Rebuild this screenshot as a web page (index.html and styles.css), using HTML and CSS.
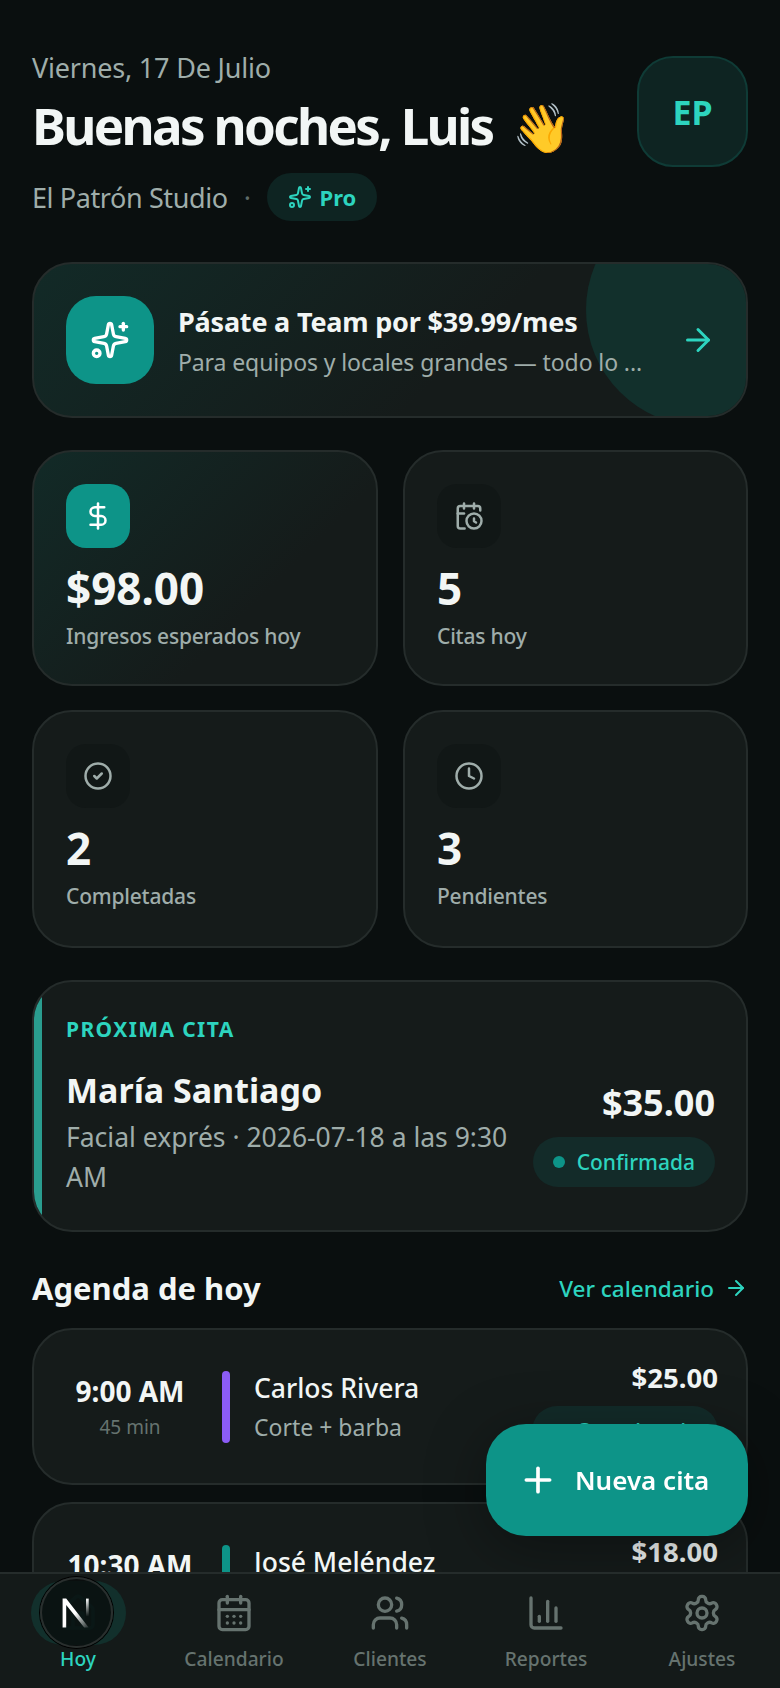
FILE: index.html
```html
<!DOCTYPE html>
<html lang="es">
  <head>
    <meta charset="UTF-8" />
    <meta name="viewport" content="width=device-width, initial-scale=1.0" />
    <title>Hoy</title>
    <link rel="stylesheet" href="styles.css">
  </head>
  <body>
    <svg class="sprite" width="0" height="0">
      <symbol id="i-sparkles" viewBox="0 0 24 24">
        <path d="M11.017 2.814a1 1 0 0 1 1.966 0l1.051 5.558a2 2 0 0 0 1.594 1.594l5.558 1.051a1 1 0 0 1 0 1.966l-5.558 1.051a2 2 0 0 0-1.594 1.594l-1.051 5.558a1 1 0 0 1-1.966 0l-1.051-5.558a2 2 0 0 0-1.594-1.594l-5.558-1.051a1 1 0 0 1 0-1.966l5.558-1.051a2 2 0 0 0 1.594-1.594z" />
        <path d="M20 2v4" /><path d="M22 4h-4" /><circle cx="4" cy="20" r="2" />
      </symbol>
      <symbol id="i-arrow" viewBox="0 0 24 24">
        <path d="M5 12h14" /><path d="m12 5 7 7-7 7" />
      </symbol>
      <symbol id="i-dollar" viewBox="0 0 24 24">
        <path d="M12 2v20" /><path d="M17 5H9.5a3.5 3.5 0 0 0 0 7h5a3.5 3.5 0 0 1 0 7H6" />
      </symbol>
      <symbol id="i-calclock" viewBox="0 0 24 24">
        <path d="M16 14v2.2l1.6 1" /><path d="M16 2v4" />
        <path d="M21 7.5V6a2 2 0 0 0-2-2H5a2 2 0 0 0-2 2v14a2 2 0 0 0 2 2h3.5" />
        <path d="M3 10h5" /><path d="M8 2v4" /><circle cx="16" cy="16" r="6" />
      </symbol>
      <symbol id="i-check" viewBox="0 0 24 24">
        <circle cx="12" cy="12" r="10" /><path d="m9 12 2 2 4-4" />
      </symbol>
      <symbol id="i-clock" viewBox="0 0 24 24">
        <circle cx="12" cy="12" r="10" /><path d="M12 6v6l4 2" />
      </symbol>
      <symbol id="i-plus" viewBox="0 0 24 24">
        <path d="M5 12h14" /><path d="M12 5v14" />
      </symbol>
      <symbol id="i-house" viewBox="0 0 24 24">
        <path d="M15 21v-8a1 1 0 0 0-1-1h-4a1 1 0 0 0-1 1v8" />
        <path d="M3 10a2 2 0 0 1 .709-1.528l7-5.999a2 2 0 0 1 2.582 0l7 5.999A2 2 0 0 1 21 10v9a2 2 0 0 1-2 2H5a2 2 0 0 1-2-2z" />
      </symbol>
      <symbol id="i-calendar" viewBox="0 0 24 24">
        <path d="M8 2v4" /><path d="M16 2v4" /><rect x="3" y="4" width="18" height="18" rx="2" /><path d="M3 10h18" />
        <path d="M8 14h.01" /><path d="M12 14h.01" /><path d="M16 14h.01" />
        <path d="M8 18h.01" /><path d="M12 18h.01" /><path d="M16 18h.01" />
      </symbol>
      <symbol id="i-users" viewBox="0 0 24 24">
        <path d="M16 21v-2a4 4 0 0 0-4-4H6a4 4 0 0 0-4 4v2" /><circle cx="9" cy="7" r="4" />
        <path d="M22 21v-2a4 4 0 0 0-3-3.87" /><path d="M16 3.13a4 4 0 0 1 0 7.75" />
      </symbol>
      <symbol id="i-chart" viewBox="0 0 24 24">
        <path d="M3 3v16a2 2 0 0 0 2 2h16" /><path d="M18 17V9" /><path d="M13 17V5" /><path d="M8 17v-3" />
      </symbol>
      <symbol id="i-gear" viewBox="0 0 24 24">
        <path d="M12.22 2h-.44a2 2 0 0 0-2 2v.18a2 2 0 0 1-1 1.73l-.43.25a2 2 0 0 1-2 0l-.15-.08a2 2 0 0 0-2.73.73l-.22.38a2 2 0 0 0 .73 2.73l.15.1a2 2 0 0 1 1 1.72v.51a2 2 0 0 1-1 1.74l-.15.09a2 2 0 0 0-.73 2.73l.22.38a2 2 0 0 0 2.73.73l.15-.08a2 2 0 0 1 2 0l.43.25a2 2 0 0 1 1 1.73V20a2 2 0 0 0 2 2h.44a2 2 0 0 0 2-2v-.18a2 2 0 0 1 1-1.73l.43-.25a2 2 0 0 1 2 0l.15.08a2 2 0 0 0 2.73-.73l.22-.39a2 2 0 0 0-.73-2.73l-.15-.08a2 2 0 0 1-1-1.74v-.5a2 2 0 0 1 1-1.74l.15-.09a2 2 0 0 0 .73-2.73l-.22-.38a2 2 0 0 0-2.73-.73l-.15.08a2 2 0 0 1-2 0l-.43-.25a2 2 0 0 1-1-1.73V4a2 2 0 0 0-2-2z" />
        <circle cx="12" cy="12" r="3" />
      </symbol>
    </svg>

    <main class="page">
      <header class="top">
        <div class="top-text">
          <p class="date">Viernes, 17 De Julio</p>
          <h1 class="hello">Buenas noches, Luis <span class="wave">👋</span></h1>
          <div class="studio">
            <span>El Patrón Studio</span>
            <span class="dot-sep">·</span>
            <span class="pro"><svg class="ico"><use href="#i-sparkles" /></svg>Pro</span>
          </div>
        </div>
        <div class="avatar">EP</div>
      </header>

      <section class="upgrade">
        <div class="upgrade-icon"><svg class="ico"><use href="#i-sparkles" /></svg></div>
        <div class="upgrade-text">
          <p class="upgrade-title">Pásate a Team por $39.99/mes</p>
          <p class="upgrade-sub">Para equipos y locales grandes — todo lo ...</p>
        </div>
        <svg class="ico upgrade-arrow"><use href="#i-arrow" /></svg>
      </section>

      <section class="stats">
        <div class="stat stat-main">
          <div class="stat-icon"><svg class="ico"><use href="#i-dollar" /></svg></div>
          <p class="stat-value">$98.00</p>
          <p class="stat-label">Ingresos esperados hoy</p>
        </div>
        <div class="stat">
          <div class="stat-icon"><svg class="ico"><use href="#i-calclock" /></svg></div>
          <p class="stat-value">5</p>
          <p class="stat-label">Citas hoy</p>
        </div>
        <div class="stat">
          <div class="stat-icon"><svg class="ico"><use href="#i-check" /></svg></div>
          <p class="stat-value">2</p>
          <p class="stat-label">Completadas</p>
        </div>
        <div class="stat">
          <div class="stat-icon"><svg class="ico"><use href="#i-clock" /></svg></div>
          <p class="stat-value">3</p>
          <p class="stat-label">Pendientes</p>
        </div>
      </section>

      <section class="next">
        <p class="next-label">PRÓXIMA CITA</p>
        <div class="next-body">
          <div class="next-info">
            <p class="next-name">María Santiago</p>
            <p class="next-sub">Facial exprés · 2026-07-18 a las 9:30 AM</p>
          </div>
          <div class="next-side">
            <p class="next-price">$35.00</p>
            <span class="status"><i class="status-dot"></i>Confirmada</span>
          </div>
        </div>
      </section>

      <div class="agenda-head">
        <h2>Agenda de hoy</h2>
        <a class="agenda-link">Ver calendario <svg class="ico"><use href="#i-arrow" /></svg></a>
      </div>

      <section class="agenda">
        <div class="row">
          <div class="row-time"><p class="hour">9:00 AM</p><p class="mins">45 min</p></div>
          <div class="row-bar purple"></div>
          <div class="row-info"><p class="row-name">Carlos Rivera</p><p class="row-sub">Corte + barba</p></div>
          <div class="row-side">
            <p class="row-price">$25.00</p>
            <span class="status status-small"><i class="status-dot"></i>Completada</span>
          </div>
        </div>
        <div class="row">
          <div class="row-time"><p class="hour">10:30 AM</p><p class="mins">30 min</p></div>
          <div class="row-bar"></div>
          <div class="row-info"><p class="row-name">José Meléndez</p><p class="row-sub">Corte clásico</p></div>
          <div class="row-side">
            <p class="row-price">$18.00</p>
            <span class="status status-small"><i class="status-dot"></i>Confirmada</span>
          </div>
        </div>
      </section>
    </main>

    <button class="fab"><svg class="ico"><use href="#i-plus" /></svg>Nueva cita</button>

    <nav class="tabs">
      <a class="tab active"><span class="tab-icon"><svg class="ico"><use href="#i-house" /></svg></span>Hoy</a>
      <a class="tab"><span class="tab-icon"><svg class="ico"><use href="#i-calendar" /></svg></span>Calendario</a>
      <a class="tab"><span class="tab-icon"><svg class="ico"><use href="#i-users" /></svg></span>Clientes</a>
      <a class="tab"><span class="tab-icon"><svg class="ico"><use href="#i-chart" /></svg></span>Reportes</a>
      <a class="tab"><span class="tab-icon"><svg class="ico"><use href="#i-gear" /></svg></span>Ajustes</a>
    </nav>

    <div class="dev-badge">
      <svg viewBox="0 0 40 40" width="36" height="36">
        <defs>
          <linearGradient id="nfade" x1="0" y1="0" x2="1" y2="1">
            <stop offset="0.5" stop-color="#fff" />
            <stop offset="1" stop-color="#fff" stop-opacity="0.1" />
          </linearGradient>
          <linearGradient id="nfade2" x1="0" y1="0" x2="0" y2="1">
            <stop offset="0" stop-color="#fff" />
            <stop offset="1" stop-color="#fff" stop-opacity="0" />
          </linearGradient>
        </defs>
        <path d="M4 4h4l25 32h-5L8 11v25H4z" fill="url(#nfade)" />
        <rect x="30" y="4" width="3" height="20" fill="url(#nfade2)" />
      </svg>
    </div>
  </body>
</html>
```

FILE: styles.css
```css
* {
  box-sizing: border-box;
}

html,
body {
  margin: 0;
  height: 100%;
  overflow: hidden;
}

body {
  background: #0a0f0f;
  color: #f2f6f5;
  font-family: "Noto Sans", "Open Sans", sans-serif;
}

p,
h1,
h2 {
  margin: 0;
}

.sprite {
  position: absolute;
}

.ico {
  width: 24px;
  height: 24px;
  fill: none;
  stroke: currentColor;
  stroke-width: 2;
  stroke-linecap: round;
  stroke-linejoin: round;
  flex: none;
}

.page {
  padding: 49px 32px 0;
}

/* header */
.top {
  display: flex;
  justify-content: space-between;
  align-items: flex-start;
}

.date {
  font-size: 27px;
  line-height: 38px;
  letter-spacing: -0.2px;
  color: #9fadaa;
}

.hello {
  font-size: 51px;
  font-weight: 700;
  line-height: 62px;
  margin-top: 7px;
  letter-spacing: -2.65px;
}

.wave {
  font-size: 48px;
  letter-spacing: 0;
  margin-left: 9px;
}

.studio {
  display: flex;
  align-items: center;
  gap: 16px;
  margin-top: 15px;
  font-size: 27px;
  letter-spacing: -0.4px;
  color: #9fadaa;
}

.dot-sep {
  color: #5f6c69;
}

.pro {
  display: flex;
  align-items: center;
  gap: 8px;
  height: 48px;
  padding: 0 21px;
  border-radius: 24px;
  background: #0e2422;
  color: #2dd4bf;
  font-size: 22px;
  font-weight: 700;
  letter-spacing: 0;
}

.avatar {
  width: 111px;
  height: 111px;
  margin-top: 7px;
  display: flex;
  align-items: center;
  justify-content: center;
  border-radius: 36px;
  border: 2px solid #0f3b36;
  background: #0e2422;
  color: #2dd4bf;
  font-size: 34px;
  font-weight: 700;
}

/* upgrade banner */
.upgrade {
  position: relative;
  overflow: hidden;
  display: flex;
  align-items: center;
  gap: 24px;
  height: 156px;
  margin-top: 41px;
  padding: 0 32px;
  border-radius: 40px;
  border: 2px solid #252c2b;
  background: linear-gradient(135deg, #122a27 0%, #151b1a 60%);
}

.upgrade::after {
  content: "";
  position: absolute;
  top: -70px;
  right: -72px;
  width: 232px;
  height: 232px;
  border-radius: 50%;
  background: #12302c;
}

.upgrade-icon {
  width: 88px;
  height: 88px;
  flex: none;
  display: flex;
  align-items: center;
  justify-content: center;
  border-radius: 30px;
  background: #0d9488;
  color: #fff;
}

.upgrade-icon .ico {
  width: 40px;
  height: 40px;
}

.upgrade-text,
.upgrade-arrow {
  position: relative;
  z-index: 1;
}

.upgrade-text {
  padding-top: 2px;
}

.upgrade-title {
  font-size: 27px;
  font-weight: 700;
  line-height: 36px;
  letter-spacing: -0.2px;
}

.upgrade-sub {
  margin-top: 6px;
  font-size: 23px;
  line-height: 32px;
  letter-spacing: -0.1px;
  color: #9fadaa;
  white-space: nowrap;
}

.upgrade-arrow {
  position: absolute;
  right: 30px;
  top: 50%;
  margin-top: -18px;
  width: 36px;
  height: 36px;
  color: #2dd4bf;
}

/* stat cards */
.stats {
  display: grid;
  grid-template-columns: 346px 345px;
  grid-template-rows: 236px 238px;
  gap: 24px 25px;
  margin-top: 32px;
}

.stat {
  padding: 32px;
  border-radius: 40px;
  border: 2px solid #252c2b;
  background: #151b1a;
}

.stat-main {
  background: linear-gradient(135deg, #122a27 0%, #151b1a 65%);
}

.stat-icon {
  width: 64px;
  height: 64px;
  display: flex;
  align-items: center;
  justify-content: center;
  border-radius: 20px;
  background: #111716;
  color: #9fadaa;
}

.stat-icon .ico {
  width: 30px;
  height: 30px;
}

.stat-main .stat-icon {
  background: #0d9488;
  color: #fff;
}

.stat-value {
  margin-top: 15px;
  font-size: 44px;
  font-weight: 700;
  line-height: 50px;
}

.stat-label {
  margin-top: 8px;
  font-size: 21px;
  line-height: 30px;
  font-weight: 500;
  letter-spacing: -0.2px;
  color: #9fadaa;
}

/* next appointment */
.next {
  position: relative;
  overflow: hidden;
  height: 252px;
  margin-top: 32px;
  padding: 33px 31px 0 32px;
  border-radius: 40px;
  border: 2px solid #252c2b;
  background: #151b1a;
}

.next::before {
  content: "";
  position: absolute;
  left: 0;
  top: 0;
  bottom: 0;
  width: 8px;
  background: #2a9d8f;
}

.next-label {
  font-size: 21px;
  font-weight: 700;
  letter-spacing: 1.4px;
  line-height: 28px;
  color: #2dd4bf;
}

.next-body {
  display: flex;
  align-items: center;
  justify-content: space-between;
  gap: 20px;
  margin-top: 25px;
}

.next-info {
  flex: 1;
  min-width: 0;
}

.next-name {
  font-size: 34px;
  font-weight: 700;
  line-height: 44px;
}

.next-sub {
  margin-top: 5px;
  font-size: 26.5px;
  line-height: 40px;
  color: #9fadaa;
}

.next-side {
  flex: none;
  display: flex;
  flex-direction: column;
  align-items: flex-end;
  gap: 11px;
  margin-top: 2px;
}

.next-price {
  font-size: 36px;
  font-weight: 700;
  line-height: 46px;
}

.status {
  display: inline-flex;
  align-items: center;
  gap: 12px;
  height: 50px;
  padding: 0 20px;
  border-radius: 25px;
  background: #132b29;
  color: #2dd4bf;
  font-size: 21px;
  font-weight: 500;
  white-space: nowrap;
}

.status-dot {
  width: 12px;
  height: 12px;
  border-radius: 50%;
  background: #0d9488;
}

/* agenda */
.agenda-head {
  display: flex;
  align-items: center;
  justify-content: space-between;
  margin-top: 36px;
}

.agenda-head h2 {
  font-size: 31px;
  font-weight: 700;
  line-height: 40px;
}

.agenda-link {
  display: flex;
  align-items: center;
  gap: 10px;
  font-size: 22.5px;
  font-weight: 500;
  color: #2dd4bf;
}

.agenda {
  display: flex;
  flex-direction: column;
  gap: 17px;
  margin-top: 20px;
}

.row {
  display: flex;
  align-items: center;
  height: 157px;
  padding: 0 28px 0 32px;
  border-radius: 40px;
  border: 2px solid #252c2b;
  background: #151b1a;
}

.row-time {
  width: 128px;
  flex: none;
  text-align: center;
}

.hour {
  font-size: 28px;
  font-weight: 700;
  line-height: 36px;
  white-space: nowrap;
}

.mins {
  font-size: 19px;
  line-height: 28px;
  margin-top: 4px;
  color: #66736f;
}

.row-bar {
  width: 8px;
  height: 72px;
  flex: none;
  margin: 0 24px 0 28px;
  border-radius: 4px;
  background: #0d9488;
}

.row-bar.purple {
  background: #8b5cf6;
}

.row-info {
  flex: 1;
}

.row-name {
  font-size: 26.5px;
  font-weight: 500;
  line-height: 36px;
}

.row-sub {
  margin-top: 4px;
  font-size: 23px;
  line-height: 34px;
  color: #9fadaa;
}

.row-side {
  display: flex;
  flex-direction: column;
  align-items: flex-end;
  gap: 10px;
  margin-top: 2px;
}

.row-price {
  font-size: 27.5px;
  font-weight: 700;
  line-height: 36px;
}

/* floating action button */
.fab {
  position: fixed;
  right: 32px;
  bottom: 152px;
  display: flex;
  align-items: center;
  gap: 17px;
  width: 262px;
  height: 112px;
  padding: 0 32px;
  border: none;
  border-radius: 40px;
  background: #0d9488;
  color: #fff;
  font-family: inherit;
  font-size: 26px;
  font-weight: 600;
  box-shadow: 0 12px 60px rgba(0, 0, 0, 0.35);
}

.fab .ico {
  width: 40px;
  height: 40px;
  stroke-width: 2.2;
}

/* bottom tabs */
.tabs {
  position: fixed;
  left: 0;
  right: 0;
  bottom: 0;
  display: grid;
  grid-template-columns: repeat(5, 1fr);
  height: 116px;
  border-top: 2px solid #252c2b;
  background: #141a19;
}

.tab {
  display: flex;
  flex-direction: column;
  align-items: center;
  font-size: 19.2px;
  font-weight: 500;
  color: #66736f;
  padding-top: 7px;
}

.tab-icon {
  display: flex;
  align-items: center;
  justify-content: center;
  width: 95px;
  height: 64px;
  border-radius: 32px;
}

.tab-icon .ico {
  width: 40px;
  height: 40px;
}

.tab.active {
  color: #2dd4bf;
}

.tab.active .tab-icon {
  background: #12302c;
  color: #14423d;
}

/* dev tools badge over the first tab */
.dev-badge {
  position: fixed;
  left: 40px;
  top: 1577px;
  width: 73px;
  height: 71px;
  display: flex;
  align-items: center;
  justify-content: center;
  border-radius: 50%;
  border: 2px solid #2a2f2e;
  background: rgba(8, 12, 12, 0.78);
  box-shadow: 0 0 0 1px #000;
}
```
